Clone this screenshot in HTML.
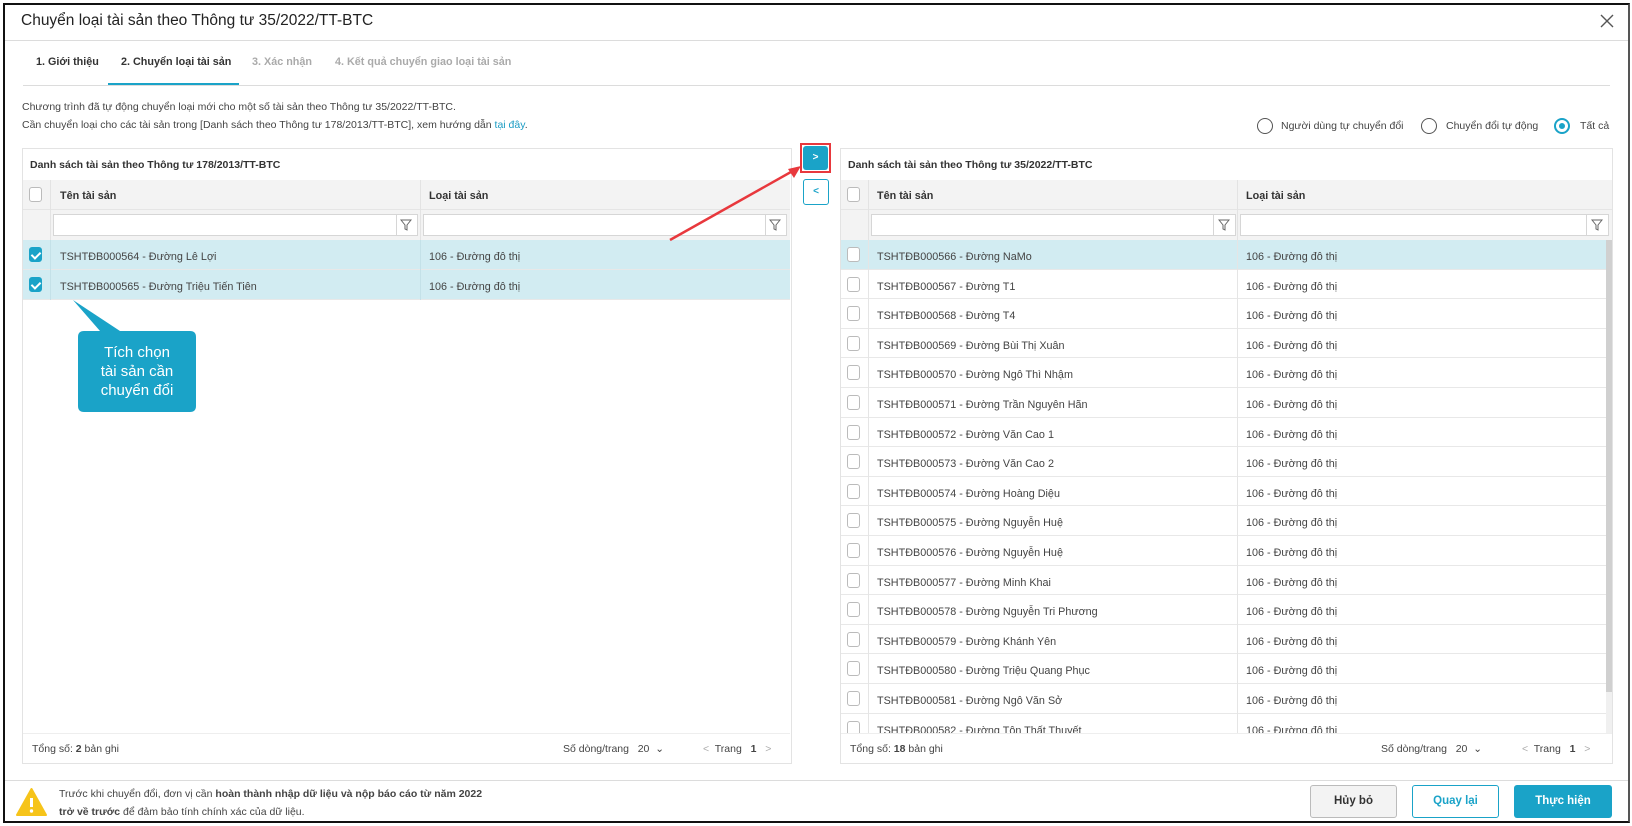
<!DOCTYPE html>
<html><head><meta charset="utf-8"><style>
*{box-sizing:border-box;margin:0;padding:0}
body{width:1632px;height:826px;background:#fff;font-family:"Liberation Sans",sans-serif;color:#333;position:relative;overflow:hidden;font-size:12px}
.a{position:absolute}
.frame{left:3px;top:3px;width:1627px;height:820px;border:2px solid #111;border-right:2px solid #555}
.title{left:21px;top:12px;font-size:15.5px;color:#222}
.hl{height:1px;background:#dcdcdc}
.tab{top:56px;font-size:10.8px;font-weight:bold;color:#333}
.tab.d{color:#aaa}
.txt{font-size:11px;color:#444}
.rt{font-size:10.8px;color:#444}
.radio{width:16px;height:16px;border:1.5px solid #555;border-radius:50%}
.radio.on{border:2px solid #1aa3c8}
.radio.on::after{content:"";position:absolute;left:3px;top:3px;width:6px;height:6px;border-radius:50%;background:#1aa3c8}
.panel{border:1px solid #e3e3e3;background:#fff}
.ptitle{font-size:10.5px;font-weight:bold;color:#333}
.hdr{background:#f3f3f3;border-bottom:1px solid #e5e5e5}
.cb{width:13px;height:15px;border:1px solid #bbb;border-radius:3px;background:#fff}
.cb.on{background:#1aa3c8;border-color:#1aa3c8}
.cb.on::after{content:"";position:absolute;left:3px;top:2px;width:4px;height:7px;border:solid #fff;border-width:0 2px 2px 0;transform:rotate(45deg)}
.row{height:29.6px;border-bottom:1px solid #e8e8e8}
.row.sel{background:#d2ecf2}
.inp{height:22px;border:1px solid #d6d6d6;background:#fff}
.btn{border-radius:3px;font-size:11.5px;font-weight:bold;text-align:center}
.h{font-size:10.8px;font-weight:bold}
</style></head><body>
<div class="a frame"></div>
<div class="a title">Chuyển loại tài sản theo Thông tư 35/2022/TT-BTC</div>
<svg class="a" style="left:1600px;top:14px" width="14" height="14"><path d="M1 1L13 13M13 1L1 13" stroke="#555" stroke-width="1.4"/></svg>
<div class="a hl" style="left:5px;top:40px;width:1623px"></div>
<div class="a tab" style="left:36px">1. Giới thiệu</div>
<div class="a tab" style="left:121px">2. Chuyển loại tài sản</div>
<div class="a tab d" style="left:252px">3. Xác nhận</div>
<div class="a tab d" style="left:335px">4. Kết quả chuyển giao loại tài sản</div>
<div class="a hl" style="left:23px;top:85px;width:1587px"></div>
<div class="a" style="left:108px;top:83px;width:131px;height:2px;background:#1aa3c8"></div>
<div class="a txt" style="left:22px;top:101px;font-size:10.5px">Chương trình đã tự động chuyển loại mới cho một số tài sản theo Thông tư 35/2022/TT-BTC.</div>
<div class="a txt" style="left:22px;top:119px;font-size:10.5px">Cần chuyển loại cho các tài sản trong [Danh sách theo Thông tư 178/2013/TT-BTC], xem hướng dẫn <span style="color:#1a9cc4">tại đây</span>.</div>
<div class="a radio" style="left:1257px;top:118px"></div><div class="a txt" style="left:1281px;top:120px;font-size:10.5px">Người dùng tự chuyển đổi</div>
<div class="a radio" style="left:1421px;top:118px"></div><div class="a txt" style="left:1446px;top:120px;font-size:10.5px">Chuyển đổi tự động</div>
<div class="a radio on" style="left:1554px;top:118px"></div><div class="a txt" style="left:1580px;top:120px;font-size:10.5px">Tất cả</div>

<!-- left panel -->
<div class="a panel" style="left:22px;top:148px;width:770px;height:616px"></div>
<div class="a ptitle" style="left:30px;top:159px">Danh sách tài sản theo Thông tư 178/2013/TT-BTC</div>
<div class="a hdr" style="left:23px;top:180px;width:767px;height:30px"></div>
<div class="a" style="left:23px;top:210px;width:767px;height:30px;background:#f3f3f3"></div>
<div class="a" style="left:50px;top:180px;width:1px;height:60px;background:#e3e3e3"></div>
<div class="a" style="left:420px;top:180px;width:1px;height:60px;background:#e3e3e3"></div>
<div class="a cb" style="left:29px;top:187px"></div>
<div class="a h" style="left:60px;top:190px">Tên tài sản</div>
<div class="a h" style="left:429px;top:190px">Loại tài sản</div>
<div class="a inp" style="left:53px;top:214px;width:365px"></div>
<div class="a inp" style="left:423px;top:214px;width:364px"></div>
<div class="a" style="left:396px;top:214px;width:1px;height:22px;background:#d6d6d6"></div>
<div class="a" style="left:765px;top:214px;width:1px;height:22px;background:#d6d6d6"></div>
<svg class="a" style="left:400px;top:219px" width="12" height="12"><path d="M1 1H11L7 6V11L5 10V6Z" fill="none" stroke="#666"/></svg>
<svg class="a" style="left:769px;top:219px" width="12" height="12"><path d="M1 1H11L7 6V11L5 10V6Z" fill="none" stroke="#666"/></svg>
<div class="a row sel" style="left:23px;top:240px;width:767px"></div>
<div class="a row sel" style="left:23px;top:270px;width:767px"></div>
<div class="a" style="left:50px;top:240px;width:1px;height:60px;background:#c4e1e8"></div>
<div class="a" style="left:420px;top:240px;width:1px;height:60px;background:#c4e1e8"></div>
<div class="a cb on" style="left:29px;top:247px"></div>
<div class="a cb on" style="left:29px;top:277px"></div>
<div class="a rt" style="left:60px;top:251px">TSHTĐB000564 - Đường Lê Lợi</div>
<div class="a rt" style="left:429px;top:251px">106 - Đường đô thị</div>
<div class="a rt" style="left:60px;top:281px">TSHTĐB000565 - Đường Triệu Tiến Tiên</div>
<div class="a rt" style="left:429px;top:281px">106 - Đường đô thị</div>
<div class="a hl" style="left:23px;top:733px;width:767px;background:#eee"></div>
<div class="a txt" style="left:32px;top:743px;font-size:10.5px">Tổng số: <b>2</b> bản ghi</div>
<div class="a txt" style="left:563px;top:743px;font-size:10.5px">Số dòng/trang &nbsp; 20 &nbsp;⌄</div>
<div class="a txt" style="left:703px;top:743px;font-size:10.5px"><span style="color:#aaa">&lt;</span>&nbsp; Trang &nbsp; <b>1</b> &nbsp; <span style="color:#aaa">&gt;</span></div>

<!-- callout -->
<svg class="a" style="left:60px;top:295px" width="150" height="125"><path d="M13 5L60 36H130Q136 36 136 42V111Q136 117 130 117H24Q18 117 18 111V42Q18 36 24 36H40Z" fill="#1aa3c8"/>
<text x="77" y="62" fill="#fff" font-size="15" text-anchor="middle" font-family="Liberation Sans,sans-serif">Tích chọn</text>
<text x="77" y="81" fill="#fff" font-size="15" text-anchor="middle" font-family="Liberation Sans,sans-serif">tài sản cần</text>
<text x="77" y="100" fill="#fff" font-size="15" text-anchor="middle" font-family="Liberation Sans,sans-serif">chuyển đổi</text></svg>

<!-- move buttons -->
<div class="a" style="left:800px;top:143px;width:31px;height:30px;border:2px solid #e8383d"></div>
<div class="a btn" style="left:803px;top:146px;width:25px;height:24px;background:#1aa3c8;color:#fff;font-size:10px;line-height:24px">&gt;</div>
<div class="a btn" style="left:803px;top:179px;width:26px;height:26px;border:1px solid #1aa3c8;color:#1aa3c8;font-size:10px;line-height:24px">&lt;</div>
<svg class="a" style="left:660px;top:160px" width="145" height="85"><path d="M10 80L138 8" stroke="#e8383d" stroke-width="2.5"/><path d="M141 6L128 9L134 18Z" fill="#e8383d"/></svg>

<!-- right panel -->
<div class="a panel" style="left:840px;top:148px;width:773px;height:616px"></div>
<div class="a ptitle" style="left:848px;top:159px">Danh sách tài sản theo Thông tư 35/2022/TT-BTC</div>
<div class="a hdr" style="left:841px;top:180px;width:771px;height:30px"></div>
<div class="a" style="left:841px;top:210px;width:771px;height:30px;background:#f3f3f3"></div>
<div class="a" style="left:868px;top:180px;width:1px;height:60px;background:#e3e3e3"></div>
<div class="a" style="left:1237px;top:180px;width:1px;height:60px;background:#e3e3e3"></div>
<div class="a cb" style="left:847px;top:187px"></div>
<div class="a h" style="left:877px;top:190px">Tên tài sản</div>
<div class="a h" style="left:1246px;top:190px">Loại tài sản</div>
<div class="a inp" style="left:871px;top:214px;width:365px"></div>
<div class="a inp" style="left:1240px;top:214px;width:369px"></div>
<div class="a" style="left:1213px;top:214px;width:1px;height:22px;background:#d6d6d6"></div>
<div class="a" style="left:1586px;top:214px;width:1px;height:22px;background:#d6d6d6"></div>
<svg class="a" style="left:1218px;top:219px" width="12" height="12"><path d="M1 1H11L7 6V11L5 10V6Z" fill="none" stroke="#666"/></svg>
<svg class="a" style="left:1591px;top:219px" width="12" height="12"><path d="M1 1H11L7 6V11L5 10V6Z" fill="none" stroke="#666"/></svg>

<div class="a" style="left:841px;top:240px;width:765px;height:493px;overflow:hidden">
<div class="a row sel" style="left:0;top:0;width:765px"></div>
<div class="a row" style="left:0;top:29.6px;width:765px"></div>
<div class="a row" style="left:0;top:59.2px;width:765px"></div>
<div class="a row" style="left:0;top:88.8px;width:765px"></div>
<div class="a row" style="left:0;top:118.4px;width:765px"></div>
<div class="a row" style="left:0;top:148px;width:765px"></div>
<div class="a row" style="left:0;top:177.6px;width:765px"></div>
<div class="a row" style="left:0;top:207.2px;width:765px"></div>
<div class="a row" style="left:0;top:236.8px;width:765px"></div>
<div class="a row" style="left:0;top:266.4px;width:765px"></div>
<div class="a row" style="left:0;top:296px;width:765px"></div>
<div class="a row" style="left:0;top:325.6px;width:765px"></div>
<div class="a row" style="left:0;top:355.2px;width:765px"></div>
<div class="a row" style="left:0;top:384.8px;width:765px"></div>
<div class="a row" style="left:0;top:414.4px;width:765px"></div>
<div class="a row" style="left:0;top:444px;width:765px"></div>
<div class="a row" style="left:0;top:473.6px;width:765px"></div>
<div class="a" style="left:27px;top:0;width:1px;height:493px;background:#e5e5e5"></div>
<div class="a" style="left:396px;top:0;width:1px;height:493px;background:#e5e5e5"></div>
<div class="a" style="left:6px;top:7px">
<div class="cb" style="margin-bottom:14.6px"></div><div class="cb" style="margin-bottom:14.6px"></div><div class="cb" style="margin-bottom:14.6px"></div><div class="cb" style="margin-bottom:14.6px"></div><div class="cb" style="margin-bottom:14.6px"></div><div class="cb" style="margin-bottom:14.6px"></div><div class="cb" style="margin-bottom:14.6px"></div><div class="cb" style="margin-bottom:14.6px"></div><div class="cb" style="margin-bottom:14.6px"></div><div class="cb" style="margin-bottom:14.6px"></div><div class="cb" style="margin-bottom:14.6px"></div><div class="cb" style="margin-bottom:14.6px"></div><div class="cb" style="margin-bottom:14.6px"></div><div class="cb" style="margin-bottom:14.6px"></div><div class="cb" style="margin-bottom:14.6px"></div><div class="cb" style="margin-bottom:14.6px"></div><div class="cb" style="margin-bottom:14.6px"></div></div>
<div class="a rt" style="left:36px;top:3px;line-height:29.6px">TSHTĐB000566 - Đường NaMo<br>TSHTĐB000567 - Đường T1<br>TSHTĐB000568 - Đường T4<br>TSHTĐB000569 - Đường Bùi Thị Xuân<br>TSHTĐB000570 - Đường Ngô Thì Nhậm<br>TSHTĐB000571 - Đường Trần Nguyên Hãn<br>TSHTĐB000572 - Đường Văn Cao 1<br>TSHTĐB000573 - Đường Văn Cao 2<br>TSHTĐB000574 - Đường Hoàng Diệu<br>TSHTĐB000575 - Đường Nguyễn Huệ<br>TSHTĐB000576 - Đường Nguyễn Huệ<br>TSHTĐB000577 - Đường Minh Khai<br>TSHTĐB000578 - Đường Nguyễn Tri Phương<br>TSHTĐB000579 - Đường Khánh Yên<br>TSHTĐB000580 - Đường Triệu Quang Phục<br>TSHTĐB000581 - Đường Ngô Văn Sở<br>TSHTĐB000582 - Đường Tôn Thất Thuyết</div>
<div class="a rt" style="left:405px;top:3px;line-height:29.6px">106 - Đường đô thị<br>106 - Đường đô thị<br>106 - Đường đô thị<br>106 - Đường đô thị<br>106 - Đường đô thị<br>106 - Đường đô thị<br>106 - Đường đô thị<br>106 - Đường đô thị<br>106 - Đường đô thị<br>106 - Đường đô thị<br>106 - Đường đô thị<br>106 - Đường đô thị<br>106 - Đường đô thị<br>106 - Đường đô thị<br>106 - Đường đô thị<br>106 - Đường đô thị<br>106 - Đường đô thị</div>
</div>
<div class="a" style="left:1606px;top:240px;width:6px;height:452px;background:#d0d0d0"></div>
<div class="a" style="left:1606px;top:692px;width:6px;height:41px;background:#f0f0f0"></div>
<div class="a hl" style="left:841px;top:733px;width:771px;background:#eee"></div>
<div class="a" style="left:841px;top:734px;width:771px;height:29px;background:#fff"></div>
<div class="a txt" style="left:850px;top:743px;font-size:10.5px">Tổng số: <b>18</b> bản ghi</div>
<div class="a txt" style="left:1381px;top:743px;font-size:10.5px">Số dòng/trang &nbsp; 20 &nbsp;⌄</div>
<div class="a txt" style="left:1522px;top:743px;font-size:10.5px"><span style="color:#aaa">&lt;</span>&nbsp; Trang &nbsp; <b>1</b> &nbsp; <span style="color:#aaa">&gt;</span></div>

<!-- bottom -->
<div class="a hl" style="left:5px;top:780px;width:1623px"></div>
<svg class="a" style="left:15px;top:787px" width="33" height="30"><path d="M16.5 2L31 28H2Z" fill="#f6c41a" stroke="#f6c41a" stroke-linejoin="round" stroke-width="2"/><path d="M16.5 11V20" stroke="#fff" stroke-width="3"/><circle cx="16.5" cy="24" r="1.7" fill="#fff"/></svg>
<div class="a txt" style="left:59px;top:788px;font-size:10.5px">Trước khi chuyển đổi, đơn vị cần <b>hoàn thành nhập dữ liệu và nộp báo cáo từ năm 2022</b></div>
<div class="a txt" style="left:59px;top:806px;font-size:10.5px"><b>trở về trước</b> để đảm bảo tính chính xác của dữ liệu.</div>
<div class="a btn" style="left:1310px;top:785px;width:87px;height:33px;background:#f3f3f3;border:1px solid #bbb;line-height:31px;color:#333">Hủy bỏ</div>
<div class="a btn" style="left:1412px;top:785px;width:87px;height:33px;background:#fff;border:1px solid #1aa3c8;line-height:31px;color:#1aa3c8">Quay lại</div>
<div class="a btn" style="left:1514px;top:785px;width:98px;height:33px;background:#1aa3c8;line-height:33px;color:#fff">Thực hiện</div>
</body></html>
